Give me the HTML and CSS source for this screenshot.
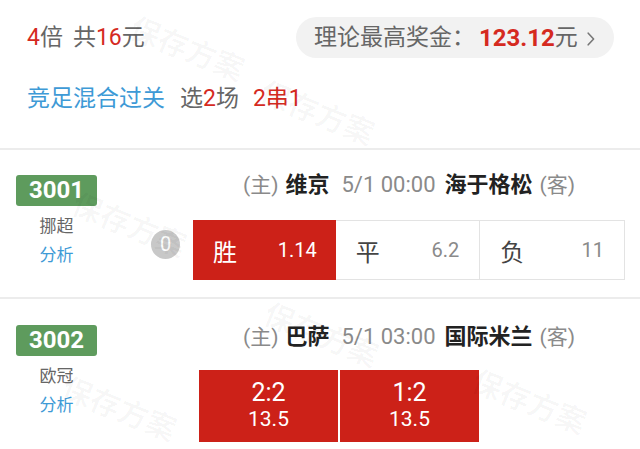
FILE: index.html
```html
<!DOCTYPE html>
<html lang="zh-CN">
<head>
<meta charset="utf-8">
<title>方案详情</title>
<link rel="stylesheet" href="styles.css">
</head>
<body>
<div class="page">
  <section class="summary">
    <div class="summary-row">
      <div class="bet"><span class="red">4</span>倍<span class="gap"></span>共<span class="red">16</span>元</div>
      <div class="pill">
        <span>理论最高奖金：</span><span class="prize">123.12</span><span>元</span>
        <svg class="chev" width="8" height="14" viewBox="0 0 8 14"><path d="M1.2 1.2L6.6 7L1.2 12.8" fill="none" stroke="#777" stroke-width="1.6" stroke-linecap="round" stroke-linejoin="round"/></svg>
      </div>
    </div>
    <div class="play-row">
      <span class="blue">竞足混合过关</span>
      <span class="pick">选<span class="red">2</span>场</span>
      <span class="red">2串1</span>
    </div>
  </section>

  <section class="match m1">
    <div class="meta">
      <div class="code">3001</div>
      <div class="league">挪超</div>
      <div class="analysis">分析</div>
    </div>
    <div class="main">
      <div class="teams">
        <span class="tag">(主)</span><b class="team">维京</b><span class="time">5/1 00:00</span><b class="team">海于格松</b><span class="tag">(客)</span>
      </div>
      <div class="odds-row">
        <span class="handicap">0</span>
        <div class="odds">
          <div class="cell on"><span class="lbl">胜</span><span class="val">1.14</span></div>
          <div class="cell"><span class="lbl">平</span><span class="val">6.2</span></div>
          <div class="cell"><span class="lbl">负</span><span class="val">11</span></div>
        </div>
      </div>
    </div>
  </section>

  <section class="match m2">
    <div class="meta">
      <div class="code">3002</div>
      <div class="league">欧冠</div>
      <div class="analysis">分析</div>
    </div>
    <div class="main">
      <div class="teams">
        <span class="tag">(主)</span><b class="team">巴萨</b><span class="time">5/1 03:00</span><b class="team">国际米兰</b><span class="tag">(客)</span>
      </div>
      <div class="scores">
        <div class="score"><span class="sc">2:2</span><span class="sv">13.5</span></div>
        <div class="score"><span class="sc">1:2</span><span class="sv">13.5</span></div>
      </div>
    </div>
  </section>

  <div class="wm wm1">保存方案</div>
  <div class="wm wm2">保存方案</div>
  <div class="wm wm3">保存方案</div>
  <div class="wm wm5">保存方案</div>
  <div class="wm wm6">保存方案</div>
  <div class="wm wm7">保存方案</div>
</div>
</body>
</html>
```

FILE: styles.css
```css
* { box-sizing: border-box; }
html, body {
  margin: 0;
  padding: 0;
  background: #fff;
}
body {
  width: 640px;
  height: 449px;
  overflow: hidden;
  font-family: Roboto, "Noto Sans CJK SC", sans-serif;
  color: #666;
}
.page {
  position: relative;
  width: 640px;
  height: 449px;
  overflow: hidden;
}

.red { color: #d52a1f; }
.blue { color: #3e9ad6; }

/* summary */
.summary {
  padding: 17px 26px 34px 27px;
  border-bottom: 2px solid #ececec;
}
.summary-row {
  display: flex;
  justify-content: space-between;
  align-items: center;
  height: 41px;
}
.bet {
  font-size: 23px;
  line-height: 30px;
  color: #666;
}
.gap {
  display: inline-block;
  width: 10px;
}
.pill {
  display: flex;
  align-items: center;
  width: 318px;
  height: 41px;
  padding: 0 0 0 18px;
  background: #f2f2f2;
  border-radius: 21px;
  font-size: 23px;
  line-height: 30px;
  color: #666;
}
.prize {
  color: #d52a1f;
  font-weight: 700;
  font-size: 24px;
  margin-left: 4px;
}
.chev {
  margin-left: 9px;
  margin-top: 2px;
}
.play-row {
  display: flex;
  margin-top: 26px;
  font-size: 23px;
  line-height: 30px;
}
.pick {
  margin-left: 15px;
  color: #666;
}
.play-row .pick + .red {
  margin-left: 14px;
}

/* match */
.match {
  display: flex;
  border-bottom: 2px solid #ececec;
}
.m1 { height: 149px; }
.m2 { height: 150px; border-bottom: none; }

.meta {
  width: 81px;
  margin-left: 16px;
  display: flex;
  flex-direction: column;
  align-items: center;
}
.m1 .meta { margin-top: 25px; }
.m2 .meta { margin-top: 26px; }
.code {
  width: 81px;
  height: 31px;
  background: #5e9b5d;
  border-radius: 3px;
  color: #fff;
  font-weight: 700;
  font-size: 24px;
  line-height: 31px;
  text-align: center;
}
.league {
  margin-top: 8px;
  font-size: 17px;
  line-height: 24px;
  color: #666;
}
.analysis {
  margin-top: 5px;
  font-size: 17px;
  line-height: 24px;
  color: #3e9ad6;
}

.main {
  flex: 1;
  margin-left: 54px;
  margin-right: 15px;
  display: flex;
  flex-direction: column;
}
.m1 .main { padding-top: 20px; }
.m2 .main { padding-top: 23px; }

.teams {
  display: flex;
  justify-content: center;
  align-items: baseline;
  gap: 7px;
  height: 30px;
  line-height: 30px;
  font-size: 22px;
  padding-left: 42px;
}
.tag {
  color: #8a8a8a;
  font-size: 21px;
}
.team {
  color: #222;
  font-weight: 700;
}
.time {
  color: #8a8a8a;
  margin: 0 2px 0 5px;
}

.odds-row {
  display: flex;
  align-items: flex-start;
  margin-top: 20px;
}
.handicap {
  width: 29px;
  height: 29px;
  margin-top: 10px;
  margin-right: 13px;
  border-radius: 50%;
  background: #c8c8c8;
  color: #fff;
  font-size: 20px;
  line-height: 29px;
  text-align: center;
}
.odds {
  flex: 1;
  display: flex;
  height: 60px;
}
.cell {
  flex: 1;
  display: flex;
  justify-content: space-between;
  align-items: center;
  padding: 0 20px 0 20px;
  border: 1px solid #e3e3e3;
}
.cell + .cell { border-left: none; }
.cell.on {
  background: #cc2118;
  border-color: #cc2118;
  padding: 0 18px 0 19px;
}
.lbl {
  font-size: 24px;
  color: #444;
}
.val {
  font-size: 20px;
  color: #8a8a8a;
}
.cell.on .lbl, .cell.on .val { color: #fff; }

.scores {
  display: flex;
  gap: 2px;
  margin-top: 18px;
  margin-left: 48px;
}
.score {
  width: 139px;
  height: 72px;
  background: #cc2118;
  color: #fff;
  display: flex;
  flex-direction: column;
  justify-content: center;
  align-items: center;
}
.sc {
  font-size: 25px;
  line-height: 27px;
}
.sv {
  font-size: 21px;
  line-height: 27px;
}

/* watermarks */
.wm {
  position: absolute;
  font-family: "Noto Sans CJK SC", sans-serif;
  font-size: 30px;
  font-weight: 700;
  line-height: 1;
  color: rgba(0, 0, 0, 0.03);
  transform: rotate(22deg);
  white-space: nowrap;
  pointer-events: none;
}
.wm1 { left: 128px; top: 32px; }
.wm2 { left: 258px; top: 96px; }
.wm3 { left: 70px; top: 208px; }
.wm5 { left: 262px; top: 318px; }
.wm6 { left: 60px; top: 392px; }
.wm7 { left: 470px; top: 385px; }
```
